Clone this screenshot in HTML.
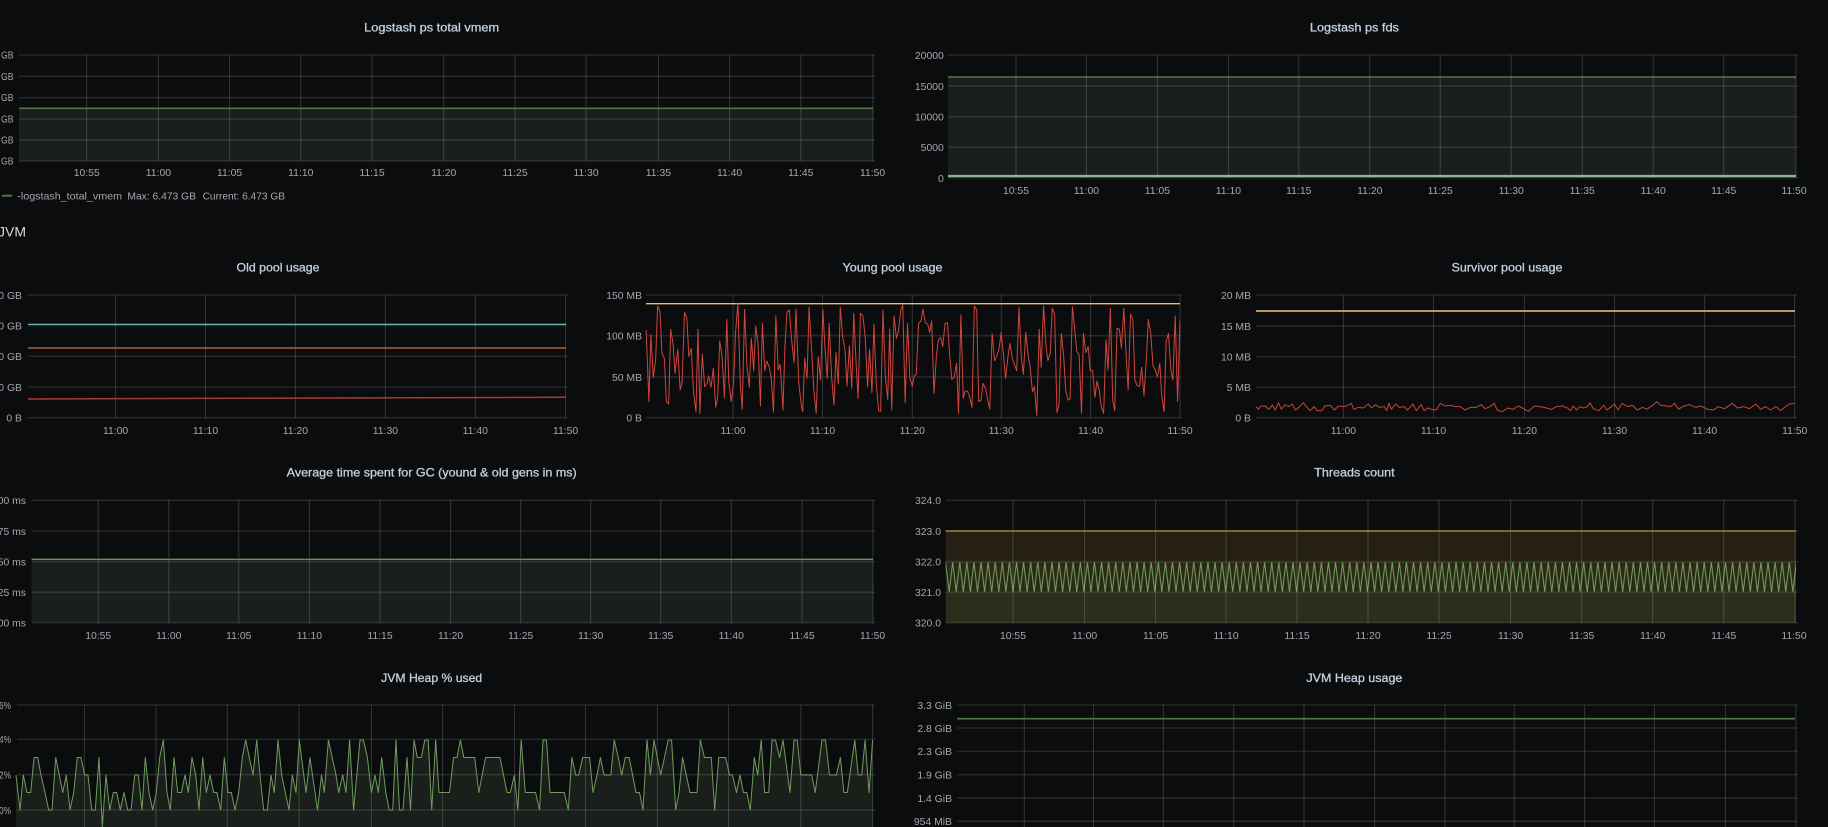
<!DOCTYPE html>
<html><head><meta charset="utf-8"><title>Logstash dashboard</title>
<style>
html,body{margin:0;padding:0;width:1828px;height:827px;overflow:hidden;background:#0b0c0e}
svg{display:block}
text{font-family:"Liberation Sans",sans-serif}
.t{font-size:12px;font-weight:400;fill:#c3d0dc;stroke:#c3d0dc;stroke-width:.3;text-anchor:middle}
.l{font-size:10.4px;fill:#a4a8ac}
.e{text-anchor:end}
.m{text-anchor:middle}
.h{fill:none;stroke:rgba(255,255,255,.11);stroke-width:1.6}
.v{fill:none;stroke:rgba(255,255,255,.17);stroke-width:1}
</style></head><body>
<svg width="1828" height="827" viewBox="0 0 1828 827" xmlns="http://www.w3.org/2000/svg">
<defs>
<pattern id="zz" patternUnits="userSpaceOnUse" x="945.6" y="561.7" width="7.09" height="30.6">
<path d="M0 0.5L3.545 30.1L7.09 0.5" fill="none" stroke="#78a160" stroke-width="1"/>
</pattern>
</defs>
<rect width="1828" height="827" fill="#0b0c0e"/>

<!-- Panel 1 -->
<text class="t" x="431.7" y="31.5" textLength="135" lengthAdjust="spacingAndGlyphs">Logstash ps total vmem</text>
<rect x="19" y="108" width="854" height="53" fill="#1a1f1b"/>
<path class="h" d="M19 55H875M19 76.3H875M19 97.7H875M19 119H875M19 140H875M19 161H875"/>
<path class="v" d="M86.7 55V161M158.4 55V161M229.6 55V161M300.8 55V161M372 55V161M443.7 55V161M515 55V161M586 55V161M658.4 55V161M729.6 55V161M800.8 55V161M873 55V161"/>
<path d="M19 108.3H873" stroke="#54753f" stroke-width="1.6" fill="none"/>
<text class="l" x="1" y="58.5" textLength="12.5" lengthAdjust="spacingAndGlyphs">GB</text><text class="l" x="1" y="80" textLength="12.5" lengthAdjust="spacingAndGlyphs">GB</text><text class="l" x="1" y="101" textLength="12.5" lengthAdjust="spacingAndGlyphs">GB</text><text class="l" x="1" y="122.5" textLength="12.5" lengthAdjust="spacingAndGlyphs">GB</text><text class="l" x="1" y="143.5" textLength="12.5" lengthAdjust="spacingAndGlyphs">GB</text><text class="l" x="1" y="164.5" textLength="12.5" lengthAdjust="spacingAndGlyphs">GB</text>
<text class="l m" x="86.7" y="176">10:55</text><text class="l m" x="158.4" y="176">11:00</text><text class="l m" x="229.6" y="176">11:05</text><text class="l m" x="300.8" y="176">11:10</text><text class="l m" x="372" y="176">11:15</text><text class="l m" x="443.7" y="176">11:20</text><text class="l m" x="515" y="176">11:25</text><text class="l m" x="586" y="176">11:30</text><text class="l m" x="658.4" y="176">11:35</text><text class="l m" x="729.6" y="176">11:40</text><text class="l m" x="800.8" y="176">11:45</text><text class="l m" x="872.6" y="176">11:50</text>
<path d="M2 195.7H12" stroke="#54753f" stroke-width="2"/>
<text class="l" x="17.3" y="199.5" textLength="104.7" lengthAdjust="spacingAndGlyphs">-logstash_total_vmem</text>
<text class="l" x="127.4" y="199.5" textLength="68.6" lengthAdjust="spacingAndGlyphs">Max: 6.473 GB</text>
<text class="l" x="202.6" y="199.5" textLength="82.4" lengthAdjust="spacingAndGlyphs">Current: 6.473 GB</text>

<!-- Panel 2 -->
<text class="t" x="1354.4" y="31.5" textLength="89" lengthAdjust="spacingAndGlyphs">Logstash ps fds</text>
<rect x="948" y="77" width="848" height="101" fill="#1a1f1b"/>
<path class="h" d="M948 55H1798M948 86H1798M948 116.7H1798M948 147.3H1798M948 177.7H1798"/>
<path class="v" d="M1016 55V178M1086.4 55V178M1157.4 55V178M1228.4 55V178M1298.8 55V178M1369.8 55V178M1440.2 55V178M1511.2 55V178M1582.2 55V178M1653.2 55V178M1723.7 55V178M1795.9 55V178"/>
<path d="M948 77H1796" stroke="#78a264" stroke-width="1.1" fill="none"/>
<path d="M948 176H1796" stroke="#86b994" stroke-width="2.2" fill="none"/>
<text class="l e" x="943.8" y="59">20000</text><text class="l e" x="943.8" y="90">15000</text><text class="l e" x="943.8" y="120.5">10000</text><text class="l e" x="943.8" y="151">5000</text><text class="l e" x="943.8" y="182">0</text>
<text class="l m" x="1016" y="194">10:55</text><text class="l m" x="1086.4" y="194">11:00</text><text class="l m" x="1157.4" y="194">11:05</text><text class="l m" x="1228.4" y="194">11:10</text><text class="l m" x="1298.8" y="194">11:15</text><text class="l m" x="1369.8" y="194">11:20</text><text class="l m" x="1440.2" y="194">11:25</text><text class="l m" x="1511.2" y="194">11:30</text><text class="l m" x="1582.2" y="194">11:35</text><text class="l m" x="1653.2" y="194">11:40</text><text class="l m" x="1723.7" y="194">11:45</text><text class="l m" x="1794" y="194">11:50</text>

<!-- JVM row -->
<text x="-2" y="236.5" font-size="14" fill="#d8d9da">JVM</text>

<!-- Old pool -->
<text class="t" x="278" y="271.5" textLength="83" lengthAdjust="spacingAndGlyphs">Old pool usage</text>
<path class="h" d="M28 295H567.5M28 325.7H567.5M28 356.3H567.5M28 387H567.5M28 417.7H567.5"/>
<path class="v" d="M115.6 295V418M205.5 295V418M295.4 295V418M385.4 295V418M475.3 295V418M565.6 295V418"/>
<path d="M28 324.3H566" stroke="#72d8c2" stroke-width="1.2" fill="none"/>
<path d="M28 348H566" stroke="#a9622e" stroke-width="1.6" fill="none"/>
<path d="M28 399L205 398.4L566 397.3" stroke="#a83c34" stroke-width="1.5" fill="none"/>
<text class="l e" x="22" y="299">40 GB</text><text class="l e" x="22" y="329.5">30 GB</text><text class="l e" x="22" y="360">20 GB</text><text class="l e" x="22" y="391">10 GB</text><text class="l e" x="22" y="421.5">0 B</text>
<text class="l m" x="115.6" y="434">11:00</text><text class="l m" x="205.5" y="434">11:10</text><text class="l m" x="295.4" y="434">11:20</text><text class="l m" x="385.4" y="434">11:30</text><text class="l m" x="475.3" y="434">11:40</text><text class="l m" x="565.6" y="434">11:50</text>

<!-- Young pool -->
<text class="t" x="892.5" y="271.5" textLength="100" lengthAdjust="spacingAndGlyphs">Young pool usage</text>
<path class="h" d="M646 295H1181.5M646 335.7H1181.5M646 377H1181.5M646 417.7H1181.5"/>
<path class="v" d="M733.1 295V418M822.5 295V418M912.3 295V418M1001.2 295V418M1090.6 295V418M1180 295V418"/>
<path d="M646 303.7H1180" stroke="#e9b873" stroke-width="1.4" fill="none"/>
<g transform="translate(590,250) scale(0.39541,0.33333)">
<polyline vector-effect="non-scaling-stroke" fill="none" stroke="#cf463c" stroke-width="1" stroke-linejoin="round" points="142,240 149,455 154,255 160,382 166,330 171,168 177,185 182,310 188,325 193,455 199,462 204,238 210,280 215,370 222,298 228,420 233,395 239,187 245,205 250,320 256,295 262,430 268,485 273,238 278,490 284,313 290,410 296,400 300,378 306,412 312,355 318,472 323,440 328,273 334,320 340,443 346,208 351,395 357,455 363,400 368,250 374,160 380,400 385,478 391,178 397,350 403,412 408,265 414,362 419,228 425,280 431,468 436,220 442,362 447,333 453,350 458,380 464,487 470,197 476,360 481,343 488,480 493,290 498,187 504,180 510,270 516,338 521,177 528,400 535,470 538,485 543,325 549,385 554,172 560,290 566,420 572,490 577,320 583,390 589,180 594,290 600,385 605,220 611,380 617,465 622,308 628,402 633,172 639,260 645,300 650,408 656,287 662,415 667,190 673,340 678,445 684,190 690,197 696,260 702,410 707,298 713,428 718,222 724,400 730,482 735,484 741,180 747,380 753,448 758,237 763,480 769,198 775,265 780,245 786,180 791,165 797,458 803,220 809,385 815,408 820,378 825,373 831,220 837,213 842,178 848,218 854,222 859,247 864,213 870,430 876,320 881,270 887,262 892,290 898,220 904,218 910,320 915,388 921,382 927,340 932,490 938,195 944,445 949,423 955,424 960,440 966,472 972,168 978,180 983,455 989,450 994,400 1000,415 1006,450 1011,478 1017,250 1023,332 1029,318 1034,300 1040,247 1046,320 1051,385 1057,320 1062,280 1068,325 1074,345 1079,362 1085,172 1091,325 1096,373 1102,247 1108,315 1113,350 1119,425 1124,410 1130,497 1136,238 1141,352 1147,168 1153,285 1158,332 1164,310 1169,175 1175,192 1181,488 1186,465 1192,250 1198,320 1203,420 1209,450 1214,447 1220,170 1226,240 1231,303 1237,315 1243,490 1248,250 1254,308 1260,290 1265,362 1271,362 1277,442 1282,393 1288,420 1293,470 1299,490 1305,270 1310,360 1316,175 1322,450 1327,482 1333,235 1339,238 1344,295 1350,175 1356,320 1361,420 1367,192 1373,210 1378,390 1384,408 1390,408 1395,352 1401,437 1407,330 1412,208 1418,250 1424,348 1429,358 1435,380 1441,340 1446,440 1452,485 1457,275 1463,250 1469,360 1474,390 1480,198 1486,455 1492,212"/>
</g>
<text class="l e" x="642" y="299">150 MB</text><text class="l e" x="642" y="339.5">100 MB</text><text class="l e" x="642" y="381">50 MB</text><text class="l e" x="642" y="421.5">0 B</text>
<text class="l m" x="733.1" y="434">11:00</text><text class="l m" x="822.5" y="434">11:10</text><text class="l m" x="912.3" y="434">11:20</text><text class="l m" x="1001.2" y="434">11:30</text><text class="l m" x="1090.6" y="434">11:40</text><text class="l m" x="1180" y="434">11:50</text>

<!-- Survivor pool -->
<text class="t" x="1507" y="271.5" textLength="111" lengthAdjust="spacingAndGlyphs">Survivor pool usage</text>
<path class="h" d="M1256 295H1796.7M1256 326H1796.7M1256 356.7H1796.7M1256 387.3H1796.7M1256 417.7H1796.7"/>
<path class="v" d="M1343.4 295V418M1433.5 295V418M1524.4 295V418M1614.5 295V418M1704.6 295V418M1794.7 295V418"/>
<path d="M1256 311H1795" stroke="#d6aa6a" stroke-width="1.8" fill="none"/>
<g transform="translate(1200,250) scale(0.40045,0.33333)">
<polyline vector-effect="non-scaling-stroke" fill="none" stroke="#c8443a" stroke-width="1" stroke-linejoin="round" points="140,470 146,478 152,468 163,468 172,478 181,465 188,480 196,458 203,478 212,464 222,470 230,462 238,480 247,472 258,458 266,470 275,482 285,470 292,482 304,482 312,468 325,466 336,480 346,468 360,470 372,464 378,460 384,478 396,472 408,474 420,462 428,474 438,464 448,472 460,470 466,482 472,460 478,478 488,462 498,472 510,470 518,480 532,462 540,482 552,464 560,482 568,474 578,478 590,480 600,460 612,468 625,466 638,470 650,470 662,480 675,472 690,472 702,464 712,476 724,470 735,460 742,480 755,485 768,474 782,478 795,468 808,476 820,484 835,468 850,470 865,474 878,478 890,470 905,468 918,474 925,482 932,468 940,480 948,470 958,474 968,470 974,458 982,476 996,482 1008,466 1016,480 1025,472 1035,462 1044,480 1054,460 1068,470 1080,466 1092,480 1105,472 1116,478 1128,468 1141,455 1150,466 1165,468 1175,470 1185,460 1195,478 1205,470 1222,464 1238,472 1250,468 1268,478 1282,480 1295,470 1310,476 1330,460 1342,474 1358,470 1372,476 1388,462 1400,478 1412,470 1425,480 1438,470 1450,482 1462,470 1472,462 1485,460"/>
</g>
<text class="l e" x="1251" y="299">20 MB</text><text class="l e" x="1251" y="330">15 MB</text><text class="l e" x="1251" y="360.5">10 MB</text><text class="l e" x="1251" y="391">5 MB</text><text class="l e" x="1251" y="421.5">0 B</text>
<text class="l m" x="1343.4" y="434">11:00</text><text class="l m" x="1433.5" y="434">11:10</text><text class="l m" x="1524.4" y="434">11:20</text><text class="l m" x="1614.5" y="434">11:30</text><text class="l m" x="1704.6" y="434">11:40</text><text class="l m" x="1794.7" y="434">11:50</text>

<!-- GC -->
<text class="t" x="431.7" y="476.5" textLength="290" lengthAdjust="spacingAndGlyphs">Average time spent for GC (yound &amp; old gens in ms)</text>
<rect x="31.6" y="559.3" width="841.4" height="63.4" fill="#1a1f1b"/>
<path class="h" d="M31.6 500.3H875M31.6 531H875M31.6 561.7H875M31.6 592.3H875M31.6 622.7H875"/>
<path class="v" d="M98.2 500V623M168.8 500V623M238.8 500V623M309.4 500V623M380 500V623M450.6 500V623M520.7 500V623M590.7 500V623M660.7 500V623M731.3 500V623M802 500V623M873 500V623"/>
<path d="M31.6 559.3H873" stroke="#6a9452" stroke-width="1.4" fill="none"/>
<text class="l e" x="26" y="504">1.00 ms</text><text class="l e" x="26" y="535">0.75 ms</text><text class="l e" x="26" y="565.5">0.50 ms</text><text class="l e" x="26" y="596">0.25 ms</text><text class="l e" x="26" y="626.5">0.00 ms</text>
<text class="l m" x="98.2" y="639">10:55</text><text class="l m" x="168.8" y="639">11:00</text><text class="l m" x="238.8" y="639">11:05</text><text class="l m" x="309.4" y="639">11:10</text><text class="l m" x="380" y="639">11:15</text><text class="l m" x="450.6" y="639">11:20</text><text class="l m" x="520.7" y="639">11:25</text><text class="l m" x="590.7" y="639">11:30</text><text class="l m" x="660.7" y="639">11:35</text><text class="l m" x="731.3" y="639">11:40</text><text class="l m" x="802" y="639">11:45</text><text class="l m" x="872.6" y="639">11:50</text>

<!-- Threads -->
<text class="t" x="1354.4" y="476.5" textLength="80.5" lengthAdjust="spacingAndGlyphs">Threads count</text>
<rect x="945.6" y="531" width="850.4" height="30.7" fill="#251f14"/>
<rect x="945.6" y="561.7" width="850.4" height="30.6" fill="#2a2816"/>
<rect x="945.6" y="592.3" width="850.4" height="30.4" fill="#2d2d1c"/>
<rect x="945.6" y="561.7" width="850.4" height="30.6" fill="url(#zz)"/>
<path class="h" d="M945.6 500.3H1798M945.6 531H1798M945.6 561.7H1798M945.6 592.3H1798M945.6 622.7H1798"/>
<path class="v" d="M1013 500V623M1084.6 500V623M1155.6 500V623M1226 500V623M1297 500V623M1368 500V623M1439 500V623M1510.6 500V623M1581.7 500V623M1652.7 500V623M1723.7 500V623M1795 500V623"/>
<path d="M945.6 531H1796" stroke="#a5802e" stroke-width="1.6" fill="none"/>
<text class="l e" x="941" y="504">324.0</text><text class="l e" x="941" y="535">323.0</text><text class="l e" x="941" y="565.5">322.0</text><text class="l e" x="941" y="596">321.0</text><text class="l e" x="941" y="626.5">320.0</text>
<text class="l m" x="1013" y="639">10:55</text><text class="l m" x="1084.6" y="639">11:00</text><text class="l m" x="1155.6" y="639">11:05</text><text class="l m" x="1226" y="639">11:10</text><text class="l m" x="1297" y="639">11:15</text><text class="l m" x="1368" y="639">11:20</text><text class="l m" x="1439" y="639">11:25</text><text class="l m" x="1510.6" y="639">11:30</text><text class="l m" x="1581.7" y="639">11:35</text><text class="l m" x="1652.7" y="639">11:40</text><text class="l m" x="1723.7" y="639">11:45</text><text class="l m" x="1794" y="639">11:50</text>

<!-- Heap % -->
<text class="t" x="431.7" y="682" textLength="101" lengthAdjust="spacingAndGlyphs">JVM Heap % used</text>
<polygon fill="#1a1f1b" points="16,827 16,775 20,810 23.3,775 27,792.5 30.7,792.5 34,757.5 37.7,757.5 41,775 45,792.5 48.7,810 52,810 55.7,757.5 59.3,775 62.7,792.5 66.3,775 70,810 73.7,792.5 77.3,757.5 81,757.5 84.7,775 88,775 91.7,810 95.3,810 99,757.5 102.3,827 106,775 109.7,810 113.3,792.5 116.7,792.5 120.3,810 124,792.5 127.7,810 131,810 134.7,775 138.3,775 142,810 145.3,757.5 149,792.5 152.7,810 156.3,792.5 159.7,757.5 163.3,740 167,792.5 170.3,810 174,757.5 177.7,792.5 181.3,792.5 185,775 188.3,792.5 192,757.5 195.7,775 199,810 202.7,757.5 206.3,792.5 210,775 213.7,792.5 217,792.5 220.7,810 224.3,757.5 228,792.5 231.3,792.5 235,810 238.7,792.5 242.3,757.5 245.7,740 249.3,757.5 253,775 256.7,740 260,775 263.7,810 267.3,810 271,775 274.3,792.5 278,740 281.7,775 285.3,792.5 289,810 292.3,775 296,792.5 299.3,740 306,792.5 310,757.5 317.5,810 321.5,775 324.3,792.5 328.4,740 336,775 338.7,792.5 342.7,775 346,792.5 349.6,740 353.6,810 360,740 363.4,740 367.4,757.5 371.4,792.5 375,775 378.3,792.5 381.7,757.5 385.8,792.5 389.2,810 392.7,810 396,740 399.5,810 403,810 407,757.5 410.5,810 414,740 417.3,757.5 421.3,757.5 424.8,740 428.2,740 431.7,810 435.7,740 439,792.5 449.5,792.5 453.5,757.5 457,757.5 460.4,740 463.8,757.5 474.7,757.5 478.8,792.5 485.6,757.5 500,757.5 507,792.5 510.3,792.5 514.4,775 517.8,810 521.2,740 525.3,792.5 535.6,792.5 539.6,810 543,740 546.5,740 550,792.5 564.3,792.5 568.3,810 571.8,757.5 575.8,775 578.7,775 582.7,757.5 589.6,757.5 593,792.5 597,775 600.4,757.5 604,775 610.8,775 614.2,740 618.3,757.5 621.7,775 625.2,757.5 629.2,757.5 636,792.5 639.5,792.5 643,810 647,740 650.4,775 654,740 660.7,775 668.2,740 671.6,740 675.7,810 679,792.5 682.5,757.5 690,792.5 697,792.5 700.3,740 704.4,757.5 711.3,757.5 714.7,810 718.7,757.5 725.6,757.5 729.6,775 732.5,775 736.5,792.5 740,775 743.4,792.5 746.8,792.5 750.3,810 754.3,757.5 757.7,775 761.2,740 764.6,792.5 768.7,792.5 772,740 775.5,740 779.6,757.5 783,740 790,792.5 794,740 797.3,740 800.8,775 811.7,775 815.2,792.5 822,740 825.5,740 829.5,775 836.4,775 840.4,757.5 843.9,792.5 847.3,792.5 854.8,740 858.2,775 861.7,775 865.1,740 869.1,792.5 872.6,740 872.6,827"/>
<path class="h" d="M17 705H875M17 739.3H875M17 774.7H875M17 810H875"/>
<path class="v" d="M84.4 705V827M156 705V827M227.3 705V827M299 705V827M371.4 705V827M442.6 705V827M514.4 705V827M585.5 705V827M657.3 705V827M728.5 705V827M800.8 705V827M872.6 705V827"/>
<polyline fill="none" stroke="#6f9c5d" stroke-width="1" stroke-linejoin="round" points="16,775 20,810 23.3,775 27,792.5 30.7,792.5 34,757.5 37.7,757.5 41,775 45,792.5 48.7,810 52,810 55.7,757.5 59.3,775 62.7,792.5 66.3,775 70,810 73.7,792.5 77.3,757.5 81,757.5 84.7,775 88,775 91.7,810 95.3,810 99,757.5 102.3,827 106,775 109.7,810 113.3,792.5 116.7,792.5 120.3,810 124,792.5 127.7,810 131,810 134.7,775 138.3,775 142,810 145.3,757.5 149,792.5 152.7,810 156.3,792.5 159.7,757.5 163.3,740 167,792.5 170.3,810 174,757.5 177.7,792.5 181.3,792.5 185,775 188.3,792.5 192,757.5 195.7,775 199,810 202.7,757.5 206.3,792.5 210,775 213.7,792.5 217,792.5 220.7,810 224.3,757.5 228,792.5 231.3,792.5 235,810 238.7,792.5 242.3,757.5 245.7,740 249.3,757.5 253,775 256.7,740 260,775 263.7,810 267.3,810 271,775 274.3,792.5 278,740 281.7,775 285.3,792.5 289,810 292.3,775 296,792.5 299.3,740 306,792.5 310,757.5 317.5,810 321.5,775 324.3,792.5 328.4,740 336,775 338.7,792.5 342.7,775 346,792.5 349.6,740 353.6,810 360,740 363.4,740 367.4,757.5 371.4,792.5 375,775 378.3,792.5 381.7,757.5 385.8,792.5 389.2,810 392.7,810 396,740 399.5,810 403,810 407,757.5 410.5,810 414,740 417.3,757.5 421.3,757.5 424.8,740 428.2,740 431.7,810 435.7,740 439,792.5 449.5,792.5 453.5,757.5 457,757.5 460.4,740 463.8,757.5 474.7,757.5 478.8,792.5 485.6,757.5 500,757.5 507,792.5 510.3,792.5 514.4,775 517.8,810 521.2,740 525.3,792.5 535.6,792.5 539.6,810 543,740 546.5,740 550,792.5 564.3,792.5 568.3,810 571.8,757.5 575.8,775 578.7,775 582.7,757.5 589.6,757.5 593,792.5 597,775 600.4,757.5 604,775 610.8,775 614.2,740 618.3,757.5 621.7,775 625.2,757.5 629.2,757.5 636,792.5 639.5,792.5 643,810 647,740 650.4,775 654,740 660.7,775 668.2,740 671.6,740 675.7,810 679,792.5 682.5,757.5 690,792.5 697,792.5 700.3,740 704.4,757.5 711.3,757.5 714.7,810 718.7,757.5 725.6,757.5 729.6,775 732.5,775 736.5,792.5 740,775 743.4,792.5 746.8,792.5 750.3,810 754.3,757.5 757.7,775 761.2,740 764.6,792.5 768.7,792.5 772,740 775.5,740 779.6,757.5 783,740 790,792.5 794,740 797.3,740 800.8,775 811.7,775 815.2,792.5 822,740 825.5,740 829.5,775 836.4,775 840.4,757.5 843.9,792.5 847.3,792.5 854.8,740 858.2,775 861.7,775 865.1,740 869.1,792.5 872.6,740"/>
<text class="l" x="-1" y="709" textLength="12" lengthAdjust="spacingAndGlyphs">6%</text><text class="l" x="-1" y="743" textLength="12" lengthAdjust="spacingAndGlyphs">4%</text><text class="l" x="-1" y="778.5" textLength="12" lengthAdjust="spacingAndGlyphs">2%</text><text class="l" x="-1" y="814" textLength="12" lengthAdjust="spacingAndGlyphs">0%</text>

<!-- Heap usage -->
<text class="t" x="1354.4" y="682" textLength="96" lengthAdjust="spacingAndGlyphs">JVM Heap usage</text>
<path class="h" d="M957 705H1798M957 728H1798M957 751.3H1798M957 774.7H1798M957 798H1798M957 821.3H1798"/>
<path class="v" d="M1024.3 705V827M1093.5 705V827M1163.3 705V827M1233.7 705V827M1304 705V827M1374.6 705V827M1445 705V827M1514.2 705V827M1584.6 705V827M1654.4 705V827M1725.4 705V827M1795.9 705V827"/>
<path d="M957 718.7H1795" stroke="#527a40" stroke-width="1.7" fill="none"/>
<text class="l e" x="952" y="709">3.3 GiB</text><text class="l e" x="952" y="732">2.8 GiB</text><text class="l e" x="952" y="755">2.3 GiB</text><text class="l e" x="952" y="778.5">1.9 GiB</text><text class="l e" x="952" y="802">1.4 GiB</text><text class="l e" x="952" y="825">954 MiB</text>
</svg>
</body></html>
